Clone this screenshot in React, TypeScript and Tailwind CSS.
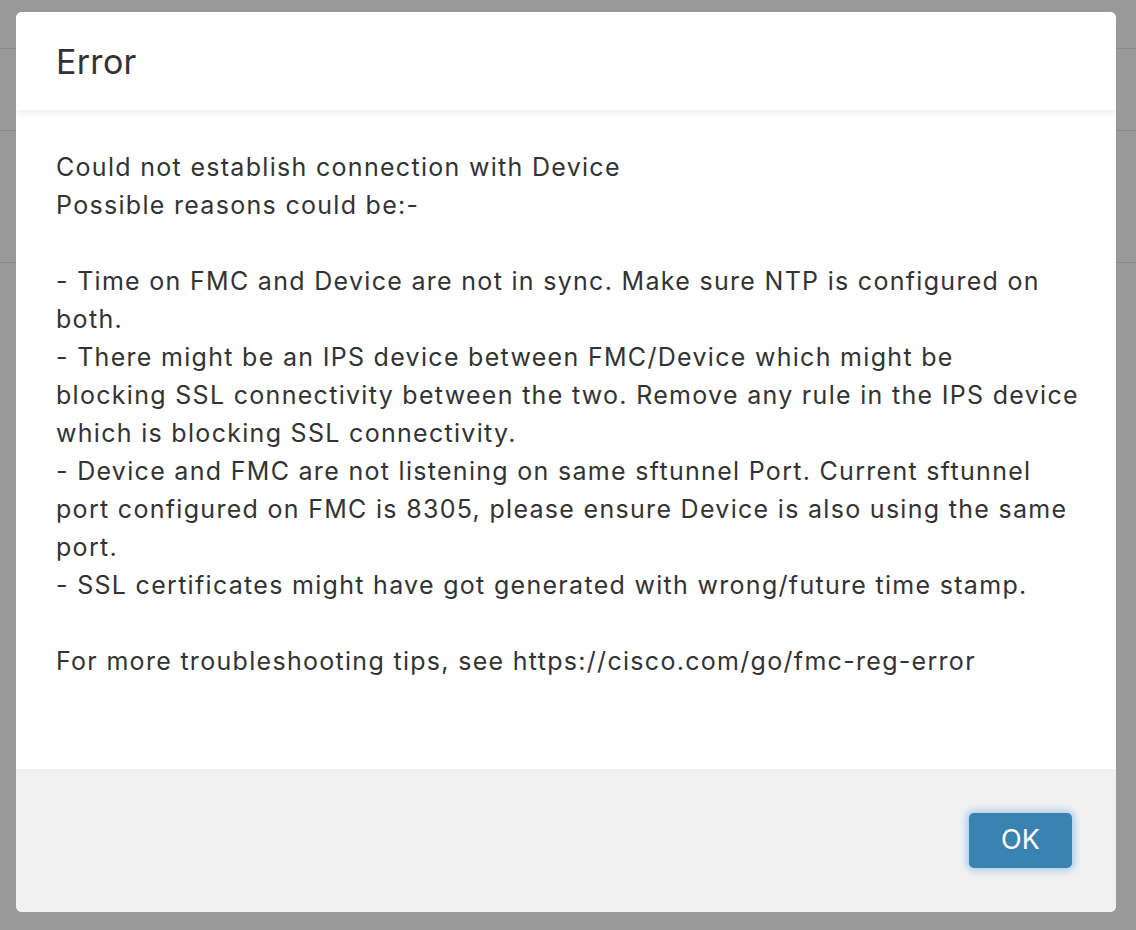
const lines = [
  "Could not establish connection with Device",
  "Possible reasons could be:-",
  "",
  "- Time on FMC and Device are not in sync. Make sure NTP is configured on",
  "both.",
  "- There might be an IPS device between FMC/Device which might be",
  "blocking SSL connectivity between the two. Remove any rule in the IPS device",
  "which is blocking SSL connectivity.",
  "- Device and FMC are not listening on same sftunnel Port. Current sftunnel",
  "port configured on FMC is 8305, please ensure Device is also using the same",
  "port.",
  "- SSL certificates might have got generated with wrong/future time stamp.",
  "",
  "For more troubleshooting tips, see https://cisco.com/go/fmc-reg-error",
];

export default function App() {
  return (
    <div className="relative h-[930px] w-full overflow-hidden bg-[#999999] font-['Inter',sans-serif]">
      {/* page underneath the backdrop */}
      <div className="flex flex-col">
        <div className="h-[49px] border-b border-[#8a8a8a]" />
        <div className="h-[82px] border-b border-[#8a8a8a]" />
        <div className="h-[132px] border-b border-[#8a8a8a]" />
      </div>

      <div className="absolute left-4 top-3 flex h-[900px] w-[1100px] flex-col overflow-hidden rounded-[6px] bg-white text-[#333333]">
        <div className="relative z-10 flex h-[98px] shrink-0 items-center bg-white pl-[40px] shadow-[0_3px_7px_rgba(0,0,0,0.07)]">
          <h1 className="text-[34px] font-normal tracking-[0.3px]">Error</h1>
        </div>

        <div className="flex-1 px-[40px] pt-[38px]">
          {lines.map((l, i) => (
            <div key={i} className="h-[38px] whitespace-nowrap text-[25px] leading-[38px] tracking-[1.3px]">
              {l}
            </div>
          ))}
        </div>

        <div className="flex h-[143px] shrink-0 items-start justify-end bg-[#f1f1f1] pr-[44px] pt-[44px]">
          <button
            type="button"
            className="h-[55px] w-[103px] rounded-[5px] bg-[#3a83b0] text-[27px] text-white shadow-[0_0_6px_3px_rgba(130,185,230,0.6)]"
          >
            OK
          </button>
        </div>
      </div>
    </div>
  );
}
